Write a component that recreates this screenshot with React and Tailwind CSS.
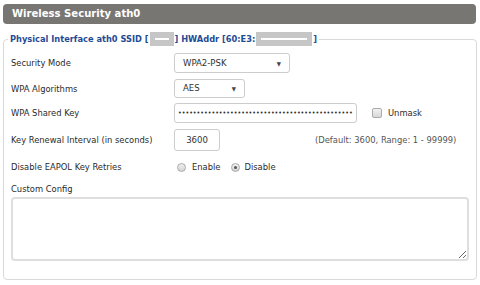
import React from "react";

const font = { fontFamily: "'DejaVu Sans Condensed', Tahoma, sans-serif" };

const Row = ({ label, className = "", children }) => (
  <div className={`flex items-center ${className}`}>
    <div className="w-[163px] shrink-0 text-[9.3px] text-[#2a2a2a]">{label}</div>
    <div className="flex items-center">{children}</div>
  </div>
);

const Select = ({ value, width, height }) => (
  <div
    className={`${width} ${height} flex items-center justify-between border border-[#ccc] rounded-[3px] bg-white pl-[8px] pr-[8px] text-[9.5px] text-[#333]`}
  >
    <span>{value}</span>
    <span className="text-[6px] text-[#444]">▼</span>
  </div>
);

const Radio = ({ checked }) => (
  <span className="w-[9px] h-[9px] rounded-full border border-[#aaa] bg-gradient-to-b from-[#f0f0f0] to-[#d4d4d4] flex items-center justify-center">
    {checked && <span className="w-[3px] h-[3px] rounded-full bg-[#555]" />}
  </span>
);

export default function App() {
  return (
    <div className="w-[480px] h-[285px] bg-white pt-[4px] pl-[3px] pr-[4px]" style={font}>
      <div className="h-[20px] rounded-[4px] bg-[#777673] flex items-center pl-[9px] text-[11.2px] font-bold text-white">
        Wireless Security ath0
      </div>

      <fieldset className="mt-[8px] mr-[7px] border border-[#d9d9d9] rounded-[4px] px-[7px] pb-[15px] h-[248px]">
        <legend className="ml-[-3px] px-[2px] text-[9.2px] font-bold text-[#1f4b94] flex items-center">
          Physical Interface ath0 SSID [
          <span className="mx-[1px] w-[24px] h-[14px] bg-[#c6c6c6] flex items-center justify-center">
            <span className="w-[14px] h-[2px] bg-white" />
          </span>
          ] HWAddr [60:E3:
          <span className="mx-[1px] w-[56px] h-[14px] bg-[#c6c6c6] flex items-center justify-center">
            <span className="w-[46px] h-[2px] bg-white" />
          </span>
          ]
        </legend>

        <div className="flex flex-col mt-[7px]">
          <Row label="Security Mode">
            <Select value="WPA2-PSK" width="w-[116px]" height="h-[20px]" />
          </Row>
          <Row label="WPA Algorithms" className="mt-[6px]">
            <Select value="AES" width="w-[71px]" height="h-[19px]" />
          </Row>
          <Row label="WPA Shared Key" className="mt-[5px]">
            <input
              type="password"
              readOnly
              value={"x".repeat(60)}
              className="w-[183px] h-[20px] border border-[#ccc] rounded-[3px] px-[3px] text-[7px] text-[#333] outline-none"
            />
            <span className="ml-[15px] w-[10px] h-[10px] border border-[#aaa] rounded-[2px] bg-gradient-to-b from-[#f2f2f2] to-[#d8d8d8]" />
            <span className="ml-[6px] text-[9.3px] text-[#2a2a2a]">Unmask</span>
          </Row>
          <Row label="Key Renewal Interval (in seconds)" className="mt-[6px]">
            <div className="w-[46px] h-[22px] border border-[#ccc] rounded-[3px] flex items-center justify-center text-[9.5px] text-[#333]">
              3600
            </div>
            <span className="ml-[95px] text-[9.3px] text-[#555]">(Default: 3600, Range: 1 - 99999)</span>
          </Row>
          <Row label="Disable EAPOL Key Retries" className="mt-[9px] h-[14px]">
            <span className="ml-[3px]">
              <Radio />
            </span>
            <span className="ml-[6px] text-[9.3px] text-[#2a2a2a]">Enable</span>
            <span className="ml-[10px]">
              <Radio checked />
            </span>
            <span className="ml-[5px] text-[9.3px] text-[#2a2a2a]">Disable</span>
          </Row>
          <div className="mt-[8px] h-[14px] flex items-center text-[9.3px] text-[#2a2a2a]">Custom Config</div>
        </div>
        <textarea
          readOnly
          className="mt-[1px] block w-[458px] h-[64px] border-2 border-[#dedede] rounded-[4px] outline-none"
        />
      </fieldset>
    </div>
  );
}
